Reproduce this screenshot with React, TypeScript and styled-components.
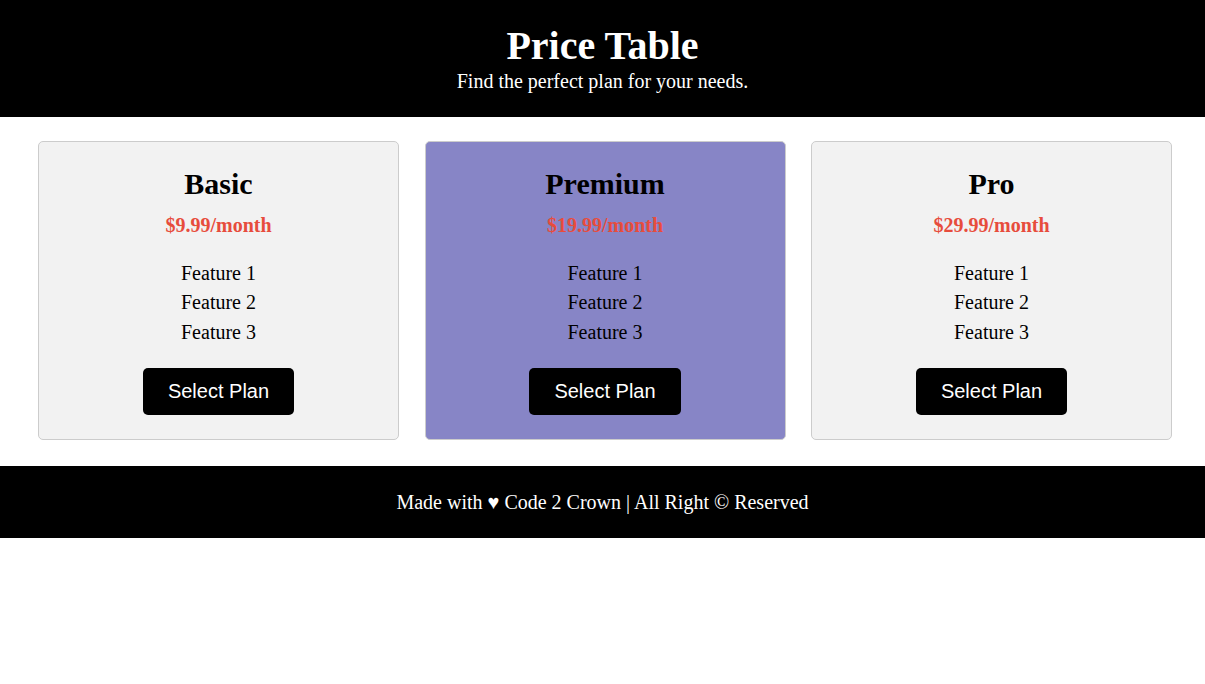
import React from "react";
import styled, { createGlobalStyle } from "styled-components";

const GlobalStyle = createGlobalStyle`
  html, body {
    margin: 0;
    padding: 0;
    background: #ffffff;
    font-family: "Liberation Serif", "Times New Roman", serif;
  }
`;

const Header = styled.header`
  background: #000000;
  color: #ffffff;
  text-align: center;
  padding: 23px 0 24px;
`;

const Title = styled.h1`
  margin: 0;
  font-size: 40px;
  line-height: 46px;
  font-weight: bold;
`;

const Subtitle = styled.p`
  margin: 1px 0 0;
  font-size: 20px;
  line-height: 23px;
`;

const Plans = styled.section`
  display: grid;
  grid-template-columns: repeat(3, 361px);
  column-gap: 25.5px;
  padding: 24px 0 26px 38px;
`;

const Card = styled.div<{ $featured?: boolean }>`
  box-sizing: border-box;
  background: ${(p) => (p.$featured ? "#8785c6" : "#f2f2f2")};
  border: 1px solid #cccccc;
  border-radius: 5px;
  padding: 25px 20px 24px;
  text-align: center;
`;

const PlanName = styled.h2`
  margin: 0 0 12px;
  font-size: 30px;
  line-height: 34.5px;
  font-weight: bold;
  color: #000000;
`;

const Price = styled.p`
  margin: 0 0 22px;
  font-size: 20px;
  line-height: 23px;
  font-weight: bold;
  color: #e74c3c;
`;

const Features = styled.ul`
  list-style: none;
  margin: 0 0 21px;
  padding: 0;
`;

const Feature = styled.li`
  font-size: 20px;
  line-height: 29.5px;
  color: #000000;
`;

const SelectButton = styled.button`
  background: #000000;
  color: #ffffff;
  border: none;
  border-radius: 5px;
  padding: 12px 25px;
  font-family: "Liberation Sans", Arial, sans-serif;
  font-size: 20px;
  line-height: 23px;
  cursor: pointer;
`;

const Footer = styled.footer`
  background: #000000;
  color: #ffffff;
  text-align: center;
  padding: 25px 0 24px;
  font-size: 20px;
  line-height: 23px;
`;

const plans = [
  { name: "Basic", price: "$9.99/month", featured: false },
  { name: "Premium", price: "$19.99/month", featured: true },
  { name: "Pro", price: "$29.99/month", featured: false },
];

export default function App() {
  return (
    <>
      <GlobalStyle />
      <Header>
        <Title>Price Table</Title>
        <Subtitle>Find the perfect plan for your needs.</Subtitle>
      </Header>
      <Plans>
        {plans.map((plan) => (
          <Card key={plan.name} $featured={plan.featured}>
            <PlanName>{plan.name}</PlanName>
            <Price>{plan.price}</Price>
            <Features>
              <Feature>Feature 1</Feature>
              <Feature>Feature 2</Feature>
              <Feature>Feature 3</Feature>
            </Features>
            <SelectButton>Select Plan</SelectButton>
          </Card>
        ))}
      </Plans>
      <Footer>Made with ♥ Code 2 Crown | All Right © Reserved</Footer>
    </>
  );
}
